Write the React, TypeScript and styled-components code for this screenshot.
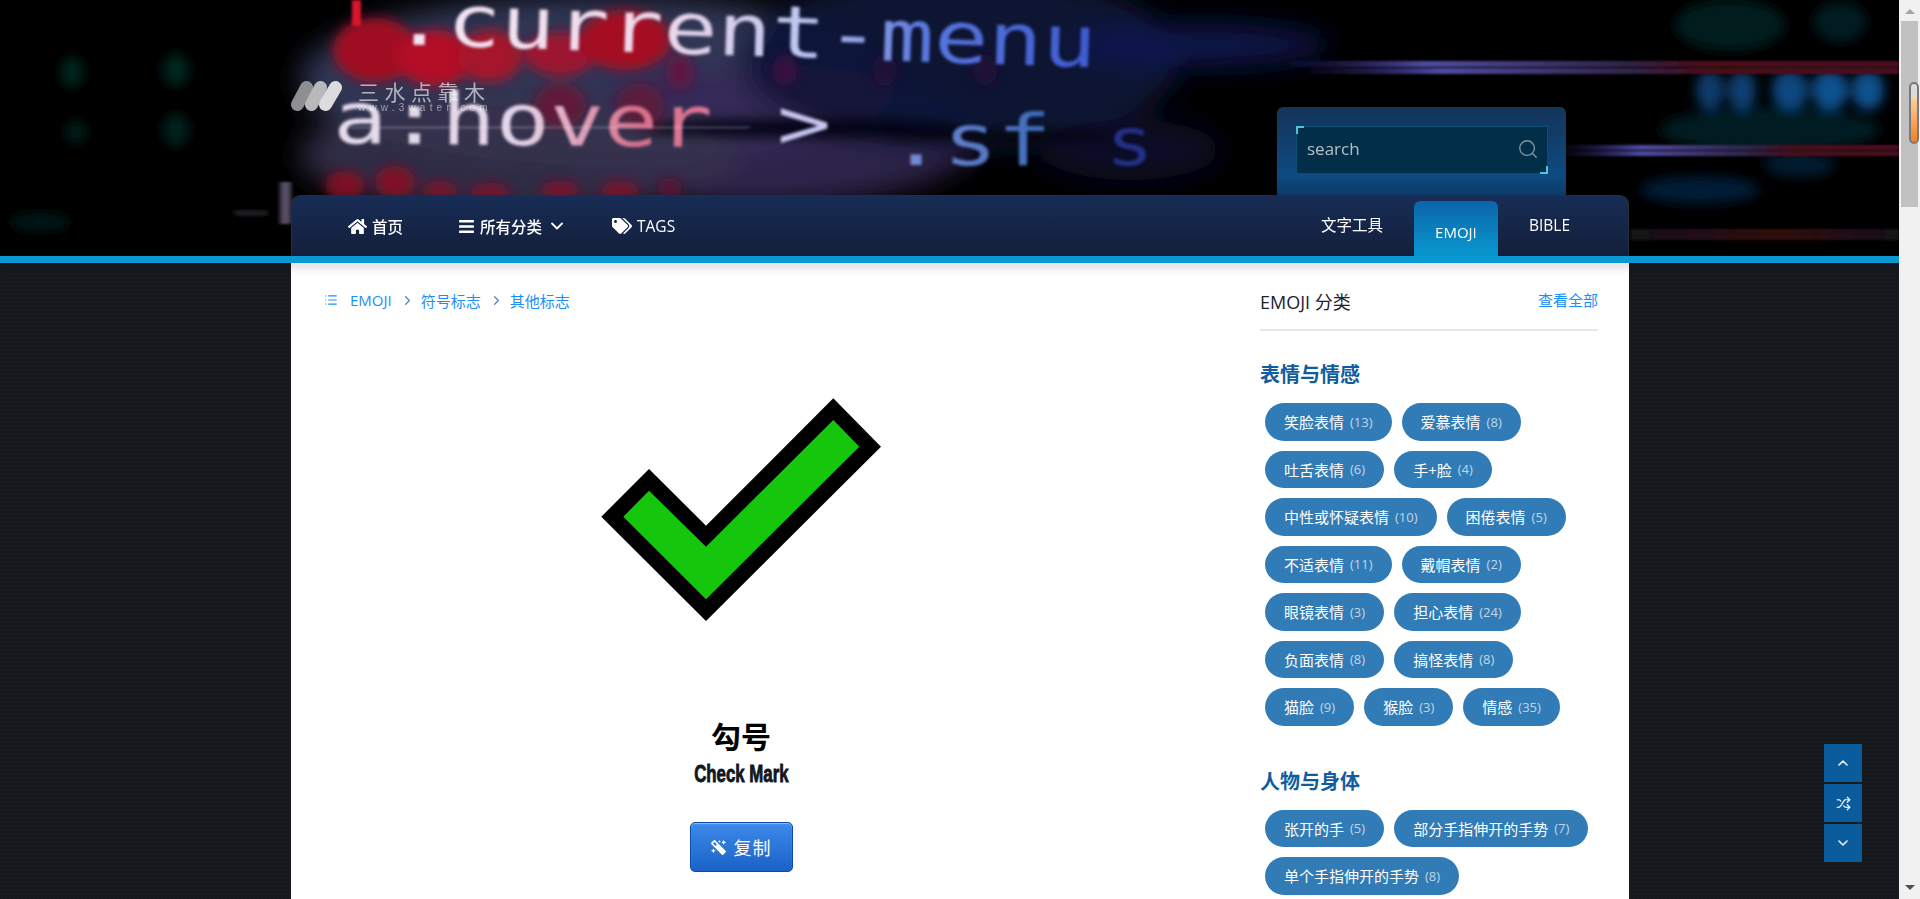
import React from "react";
import styled, { createGlobalStyle } from "styled-components";
import { FaHome, FaBars, FaTags, FaMagic } from "react-icons/fa";
import { ChevronDown, ChevronUp, ChevronRight, Search, List, Shuffle } from "lucide-react";

const UI = `"Open Sans", "Noto Sans CJK SC", sans-serif`;

const Global = createGlobalStyle`
  html, body { margin: 0; padding: 0; height: 899px; overflow: hidden; }
  body {
    font-family: ${UI};
    background-color: #15191e;
    background-image: radial-gradient(rgba(255,255,255,.012) 1px, transparent 1px);
    background-size: 4px 4px;
  }
  * { box-sizing: border-box; }
`;

const Header = styled.header`
  position: relative;
  height: 256px;
  background: #000;
  overflow: hidden;
`;
const ArtLayer = styled.svg`
  position: absolute;
  inset: 0;
  width: 1920px;
  height: 256px;
`;
const Inner = styled.div`
  position: relative;
  width: 1338px;
  margin: 0 auto;
  height: 256px;
  display: flex;
  flex-direction: column;
`;
const TopRow = styled.div`
  height: 195px;
  display: flex;
  justify-content: space-between;
  align-items: flex-end;
`;
const Logo = styled.div`
  align-self: flex-start;
  margin-top: 80px;
  display: flex;
  gap: 16px;
`;
const LogoMark = styled.svg`
  width: 51px;
  height: 30px;
  margin-top: 1px;
  display: block;
`;
const LogoText = styled.div`
  display: flex;
  flex-direction: column;
  color: rgba(255, 255, 255, 0.62);
`;
const LogoName = styled.span`
  font-family: "Noto Sans CJK SC", sans-serif;
  font-weight: 400;
  font-size: 21px;
  line-height: 22px;
  letter-spacing: 5.5px;
  white-space: nowrap;
`;
const LogoUrl = styled.span`
  font-family: "Liberation Sans", sans-serif;
  font-size: 10px;
  line-height: 11px;
  letter-spacing: 4.2px;
  white-space: nowrap;
  color: rgba(255, 255, 255, 0.5);
`;
const SearchPanel = styled.div`
  width: 289px;
  height: 88px;
  margin-right: 63px;
  padding: 19px 18px 0 19px;
  border-radius: 6px 6px 0 0;
  background: linear-gradient(#14345a 0%, #0e4a80 78%, #0d3a68 100%);
`;
const SearchBox = styled.div`
  position: relative;
  height: 48px;
  &::before, &::after {
    content: "";
    position: absolute;
    width: 6px;
    height: 6px;
    border: 2px solid #4cc4da;
  }
  &::before { left: 0; top: 0; border-right: 0; border-bottom: 0; }
  &::after { right: 0; bottom: 0; border-left: 0; border-top: 0; }
`;
const SearchInput = styled.input`
  width: 100%;
  height: 100%;
  background: #022e49;
  border: 1px solid #07506f;
  outline: 0;
  padding: 0 40px 3px 10px;
  font: 400 17px ${UI};
  color: #b4c0c6;
  &::placeholder { color: #b4c0c6; opacity: 1; }
`;
const SearchIcon = styled.span`
  position: absolute;
  right: 9px;
  top: 12px;
  display: flex;
  color: #7c97a3;
`;
const Nav = styled.nav`
  height: 61px;
  display: flex;
  align-items: stretch;
  justify-content: space-between;
  padding: 0 58px 0 56px;
  border: 1px solid #262c38;
  border-bottom: 0;
  border-radius: 9px 9px 0 0;
  background: linear-gradient(#172c55, #141f3b);
  color: #fff;
`;
const NavGroup = styled.div`
  display: flex;
  align-items: stretch;
  gap: ${(p: { $gap: number }) => p.$gap}px;
`;
const NavItem = styled.a`
  display: flex;
  align-items: center;
  gap: 5px;
  font-size: 15.5px;
  font-weight: 500;
  white-space: nowrap;
`;
const NavPlain = styled(NavItem)`
  font-weight: 400;
  padding-bottom: 3px;
`;
const ActiveTab = styled.a`
  align-self: flex-end;
  width: 84px;
  height: 55px;
  padding-top: 7px;
  display: flex;
  align-items: center;
  justify-content: center;
  font-size: 15px;
  font-weight: 500;
  border-radius: 6px 6px 0 0;
  background: linear-gradient(#0d64aa, #0898d0);
`;
const Strip = styled.div`
  position: relative;
  height: 7px;
  background: #0a98d2;
  box-shadow: 0 4px 10px rgba(0, 0, 0, 0.18);
  z-index: 2;
`;
const Sheet = styled.main`
  width: 1338px;
  margin: 0 auto;
  background: #fff;
  height: 636px;
  padding: 0 31px 0 33px;
  display: flex;
  justify-content: space-between;
  overflow: hidden;
`;
const Primary = styled.section`
  width: 834px;
  padding-top: 27px;
  display: flex;
  flex-direction: column;
  align-items: center;
`;
const Crumbs = styled.div`
  align-self: flex-start;
  height: 20px;
  display: flex;
  align-items: center;
  font-size: 15px;
  color: #1a8ffb;
`;
const CrumbIcon = styled.span`
  display: flex;
  margin-right: 12px;
`;
const CrumbSep = styled.span`
  display: flex;
  margin: 0 6px 0 8px;
  color: #4e86c4;
`;
const EmojiArt = styled.svg`
  display: block;
  width: 300px;
  height: 300px;
  margin-top: 50px;
`;
const EmojiName = styled.h1`
  margin: 55px 0 0;
  font-size: 30px;
  line-height: 40px;
  font-weight: 700;
  color: #000;
  font-family: "Noto Sans CJK SC", sans-serif;
`;
const EmojiEnglish = styled.h2`
  margin: 4px 0 0;
  font-family: "Liberation Sans", sans-serif;
  font-size: 24px;
  line-height: 30px;
  font-weight: 700;
  color: #101622;
  transform: scaleX(0.7);
  -webkit-text-stroke: 0.9px #101622;
`;
const CopyButton = styled.button`
  margin-top: 33px;
  width: 103px;
  height: 50px;
  display: flex;
  align-items: center;
  justify-content: center;
  gap: 8px;
  color: #fff;
  font: 400 18px ${UI};
  letter-spacing: 1px;
  border: 1px solid #0b47b5;
  border-radius: 5px;
  background: linear-gradient(#3c8aea, #1a62c6);
  box-shadow: inset 0 1px 1px rgba(255, 255, 255, 0.45);
`;
const WandIcon = styled(FaMagic)`
  transform: scaleX(-1);
`;
const Aside = styled.aside`
  width: 338px;
`;
const AsideHead = styled.div`
  height: 68px;
  padding-top: 25px;
  display: flex;
  justify-content: space-between;
  border-bottom: 2px solid #e6e8eb;
`;
const AsideTitle = styled.span`
  font-size: 18px;
  line-height: 28px;
  color: #1b2230;
`;
const AsideLink = styled.a`
  font-size: 15px;
  line-height: 24px;
  color: #1a8ffb;
`;
const Group = styled.div`
  padding-top: 29px;
  & + & { padding-top: 36px; }
`;
const GroupTitle = styled.h3`
  margin: 0 0 8px;
  font-size: 20px;
  line-height: 30px;
  font-weight: 700;
  color: #115c9f;
`;
const Pills = styled.div`
  display: flex;
  flex-wrap: wrap;
`;
const Pill = styled.a`
  height: 37.5px;
  margin: 5px;
  padding: 0 19px;
  display: flex;
  align-items: center;
  gap: 6px;
  border-radius: 19px;
  background: #317cb6;
  color: #fff;
  font-size: 15px;
  white-space: nowrap;
`;
const PillCount = styled.span`
  font-size: 13px;
  color: #c3d6e7;
`;
const SideTools = styled.div`
  position: fixed;
  left: 1824px;
  top: 744px;
  display: flex;
  flex-direction: column;
  gap: 2px;
`;
const SideTool = styled.a`
  width: 38px;
  height: 38px;
  display: flex;
  align-items: center;
  justify-content: center;
  background: #0b5c9c;
  color: #e8f0f6;
`;
const FakeBar = styled.div`
  position: fixed;
  top: 0;
  right: 0;
  width: 21px;
  height: 899px;
  background: #f1f1f1;
  z-index: 5;
`;
const BarArrow = styled.i<{ $down?: boolean }>`
  position: absolute;
  left: 6px;
  ${(p) => (p.$down ? "bottom: 9px;" : "top: 9px;")}
  width: 0;
  height: 0;
  border-left: 5px solid transparent;
  border-right: 5px solid transparent;
  ${(p) => (p.$down ? "border-top: 5px solid #505050;" : "border-bottom: 5px solid #a3a3a3;")}
`;
const BarThumb = styled.div`
  position: absolute;
  left: 2px;
  top: 21px;
  width: 17px;
  height: 186px;
  background: #c1c1c1;
`;
const BarGrip = styled.div`
  position: absolute;
  left: 10px;
  top: 82px;
  width: 10px;
  height: 62px;
  border: 2px solid #7a7a7a;
  border-radius: 5px;
  background: linear-gradient(#dcdcdc 0 25%, #ffcf9c 25%, #f47f20 100%);
`;

const wash: [number, number, number, number, string, number][] = [
  [600, 80, 300, 85, "#33385a", 0.95],
  [760, 135, 220, 70, "#352858", 0.85],
  [520, 155, 220, 60, "#35314c", 0.9],
  [960, 60, 220, 90, "#0e1438", 0.9],
  [1200, 45, 130, 22, "#0e1656", 0.85],
  [1130, 150, 90, 30, "#0a0f30", 0.85],
];

const blobs: [number, number, number, number, string, number][] = [
  [375, 50, 42, 32, "#a00e20", 1],
  [435, 58, 38, 28, "#b40f25", 1],
  [490, 56, 32, 26, "#a5122a", 1],
  [560, 54, 36, 22, "#9c1230", 1],
  [625, 40, 46, 30, "#a40f22", 1],
  [680, 72, 14, 18, "#6a1040", 0.8],
  [785, 70, 12, 16, "#3e1040", 0.9],
  [885, 70, 12, 16, "#260c36", 0.9],
  [985, 70, 12, 16, "#260c36", 0.9],
  [560, 105, 26, 22, "#701030", 0.75],
  [640, 105, 24, 22, "#701030", 0.65],
  [345, 185, 20, 14, "#8a1024", 0.9],
  [395, 182, 20, 16, "#8a1024", 0.9],
  [440, 190, 18, 9, "#80102a", 0.9],
  [490, 192, 20, 9, "#80102a", 0.9],
  [560, 190, 20, 9, "#80102a", 0.9],
  [620, 190, 20, 9, "#80102a", 0.9],
  [670, 188, 12, 10, "#601030", 0.9],
  [800, 128, 160, 9, "#05060c", 0.9],
  [1000, 136, 120, 7, "#04050a", 0.6],
  [1710, 90, 14, 20, "#0a4a86", 0.8],
  [1742, 90, 14, 20, "#0a4a86", 0.85],
  [1790, 90, 18, 20, "#0a4f8e", 0.9],
  [1830, 90, 18, 20, "#0a5596", 0.95],
  [1868, 90, 16, 20, "#0a5596", 0.95],
  [1730, 25, 55, 26, "#021a1e", 1],
  [1840, 22, 26, 20, "#021a20", 1],
  [1770, 130, 110, 22, "#021c20", 1],
  [1700, 190, 60, 14, "#051f3c", 0.9],
  [1800, 165, 36, 12, "#051f34", 0.9],
  [72, 72, 11, 15, "#03261e", 1],
  [176, 70, 13, 16, "#03261e", 1],
  [176, 130, 13, 16, "#03221c", 1],
  [76, 132, 11, 12, "#03221c", 0.8],
  [40, 222, 30, 8, "#021e22", 0.8],
];

const streaks: [number, number, number, number, string][] = [
  [1290, 61, 610, 6, "url(#streakA)"],
  [1310, 68, 590, 6, "url(#streakA)"],
  [1566, 145, 334, 5, "url(#streakA)"],
  [1566, 151, 334, 5, "url(#streakA)"],
  [1630, 229, 270, 11, "url(#streakB)"],
];

function HeaderArt() {
  return (
    <ArtLayer viewBox="0 0 1920 256" aria-hidden="true">
      <defs>
        <filter id="soft" x="-30%" y="-50%" width="160%" height="200%"><feGaussianBlur stdDeviation="14" /></filter>
        <filter id="mid" x="-30%" y="-50%" width="160%" height="200%"><feGaussianBlur stdDeviation="6" /></filter>
        <filter id="txt" x="-10%" y="-20%" width="120%" height="140%"><feGaussianBlur stdDeviation="1.6" /></filter>
        <filter id="hz" x="-5%" y="-50%" width="110%" height="200%"><feGaussianBlur stdDeviation="2 1" /></filter>
        <linearGradient id="lineA" x1="0" x2="1" y1="0" y2="0">
          <stop offset="0" stopColor="#f4e8f4" />
          <stop offset="0.38" stopColor="#efd8ea" />
          <stop offset="0.6" stopColor="#b8c4f0" />
          <stop offset="0.75" stopColor="#5b78e0" />
          <stop offset="1" stopColor="#3d5ad0" />
        </linearGradient>
        <linearGradient id="lineB" x1="0" x2="1" y1="0" y2="0">
          <stop offset="0" stopColor="#e4dcec" />
          <stop offset="0.5" stopColor="#e4d4e8" />
          <stop offset="0.8" stopColor="#d8708c" />
          <stop offset="1" stopColor="#e07898" />
        </linearGradient>
        <linearGradient id="lineC" x1="0" x2="1" y1="0" y2="0">
          <stop offset="0" stopColor="#7d8fd8" />
          <stop offset="1" stopColor="#3a68b8" />
        </linearGradient>
        <linearGradient id="streakA" x1="0" x2="1" y1="0" y2="0">
          <stop offset="0" stopColor="#2a2070" stopOpacity="0.15" />
          <stop offset="0.22" stopColor="#4e4aa0" />
          <stop offset="0.55" stopColor="#2f2448" />
          <stop offset="0.68" stopColor="#4c0818" />
          <stop offset="1" stopColor="#4a0c20" />
        </linearGradient>
        <linearGradient id="streakB" x1="0" x2="1" y1="0" y2="0">
          <stop offset="0" stopColor="#15131a" />
          <stop offset="0.55" stopColor="#30070d" />
          <stop offset="1" stopColor="#15131a" />
        </linearGradient>
      </defs>
      <g filter="url(#soft)">
        {wash.map(([x, y, rx, ry, c, o], i) => (
          <ellipse key={i} cx={x} cy={y} rx={rx} ry={ry} fill={c} opacity={o} />
        ))}
      </g>
      <g filter="url(#mid)">
        {blobs.map(([x, y, rx, ry, c, o], i) => (
          <ellipse key={i} cx={x} cy={y} rx={rx} ry={ry} fill={c} opacity={o} />
        ))}
      </g>
      <g filter="url(#hz)">
        {streaks.map(([x, y, w, h, c], i) => (
          <rect key={i} x={x} y={y} width={w} height={h} fill={c} />
        ))}
      </g>
      <g filter="url(#txt)" fontFamily="DejaVu Sans Mono, monospace" fontSize="72">
        <text transform="translate(392,44) rotate(1.9) scale(1.25,1)" fill="url(#lineA)">.current-menu</text>
        <text transform="translate(333,143) rotate(0.6) scale(1.25,1)" fill="url(#lineB)">a:hover</text>
        <text transform="translate(777,148) scale(1.25,1)" fill="#c8c6f0">&gt;</text>
        <text transform="translate(889,165) scale(1.25,1)" fill="url(#lineC)">.sf</text>
        <text transform="translate(1106,165) scale(1.2,1)" fill="#223088" fontSize="66">s</text>
        <rect x="352" y="0" width="9" height="26" fill="#d8182c" />
      </g>
      <g filter="url(#hz)">
        <rect x="350" y="126" width="400" height="3" fill="#ece4f0" opacity="0.18" />
        <rect x="280" y="182" width="11" height="42" fill="#a896c0" opacity="0.5" />
        <rect x="234" y="210" width="34" height="6" rx="3" fill="#3a3a48" opacity="0.45" />
      </g>
    </ArtLayer>
  );
}

const groups: { title: string; items: [string, number][] }[] = [
  {
    title: "表情与情感",
    items: [
      ["笑脸表情", 13], ["爱慕表情", 8], ["吐舌表情", 6], ["手+脸", 4], ["中性或怀疑表情", 10], ["困倦表情", 5],
      ["不适表情", 11], ["戴帽表情", 2], ["眼镜表情", 3], ["担心表情", 24], ["负面表情", 8], ["搞怪表情", 8],
      ["猫脸", 9], ["猴脸", 3], ["情感", 35],
    ],
  },
  {
    title: "人物与身体",
    items: [["张开的手", 5], ["部分手指伸开的手势", 7], ["单个手指伸开的手势", 8]],
  },
];

export default function App() {
  return (
    <>
      <Global />
      <Header>
        <HeaderArt />
        <Inner>
          <TopRow>
            <Logo>
              <LogoMark viewBox="0 0 51 30">
                <g strokeWidth="13" strokeLinecap="round" fill="none">
                  <line x1="6.5" y1="23.5" x2="15.5" y2="6.5" stroke="#8f8f92" />
                  <line x1="20.5" y1="23.5" x2="29.5" y2="6.5" stroke="#b9b9bc" />
                  <line x1="34.5" y1="23.5" x2="44.5" y2="6.5" stroke="#dcdcde" />
                </g>
              </LogoMark>
              <LogoText>
                <LogoName>三水点靠木</LogoName>
                <LogoUrl>www.3water.com</LogoUrl>
              </LogoText>
            </Logo>
            <SearchPanel>
              <SearchBox>
                <SearchInput placeholder="search" />
                <SearchIcon><Search size={22} strokeWidth={1.5} /></SearchIcon>
              </SearchBox>
            </SearchPanel>
          </TopRow>
          <Nav>
            <NavGroup $gap={55}>
              <NavItem><FaHome size={19} />首页</NavItem>
              <NavGroup $gap={45}>
                <NavItem><FaBars size={17} />所有分类<ChevronDown size={20} strokeWidth={2.2} /></NavItem>
                <NavItem><FaTags size={20} />TAGS</NavItem>
              </NavGroup>
            </NavGroup>
            <NavGroup $gap={31}>
              <NavPlain>文字工具</NavPlain>
              <ActiveTab>EMOJI</ActiveTab>
              <NavPlain>BIBLE</NavPlain>
            </NavGroup>
          </Nav>
        </Inner>
      </Header>
      <Strip />
      <Sheet>
        <Primary>
          <Crumbs>
            <CrumbIcon><List size={14} /></CrumbIcon>
            EMOJI
            <CrumbSep><ChevronRight size={15} /></CrumbSep>
            符号标志
            <CrumbSep><ChevronRight size={15} /></CrumbSep>
            其他标志
          </Crumbs>
          <EmojiArt viewBox="591 360 300 300">
            <polygon points="601.3,516.7 649,469 706,525.7 833.3,398.3 881,446.7 706,621" fill="#000" />
            <polygon points="623.3,516.7 649,490.7 706,546.7 833.3,420 859.3,446.7 706,599.3" fill="#16c60c" />
          </EmojiArt>
          <EmojiName>勾号</EmojiName>
          <EmojiEnglish>Check Mark</EmojiEnglish>
          <CopyButton><WandIcon size={15} />复制</CopyButton>
        </Primary>
        <Aside>
          <AsideHead>
            <AsideTitle>EMOJI 分类</AsideTitle>
            <AsideLink>查看全部</AsideLink>
          </AsideHead>
          {groups.map((g) => (
            <Group key={g.title}>
              <GroupTitle>{g.title}</GroupTitle>
              <Pills>
                {g.items.map(([name, n]) => (
                  <Pill key={name}>{name}<PillCount>({n})</PillCount></Pill>
                ))}
              </Pills>
            </Group>
          ))}
        </Aside>
      </Sheet>
      <SideTools>
        <SideTool><ChevronUp size={16} strokeWidth={2.4} /></SideTool>
        <SideTool><Shuffle size={15} strokeWidth={2} /></SideTool>
        <SideTool><ChevronDown size={16} strokeWidth={2.4} /></SideTool>
      </SideTools>
      <FakeBar>
        <BarArrow />
        <BarThumb />
        <BarGrip />
        <BarArrow $down />
      </FakeBar>
    </>
  );
}
